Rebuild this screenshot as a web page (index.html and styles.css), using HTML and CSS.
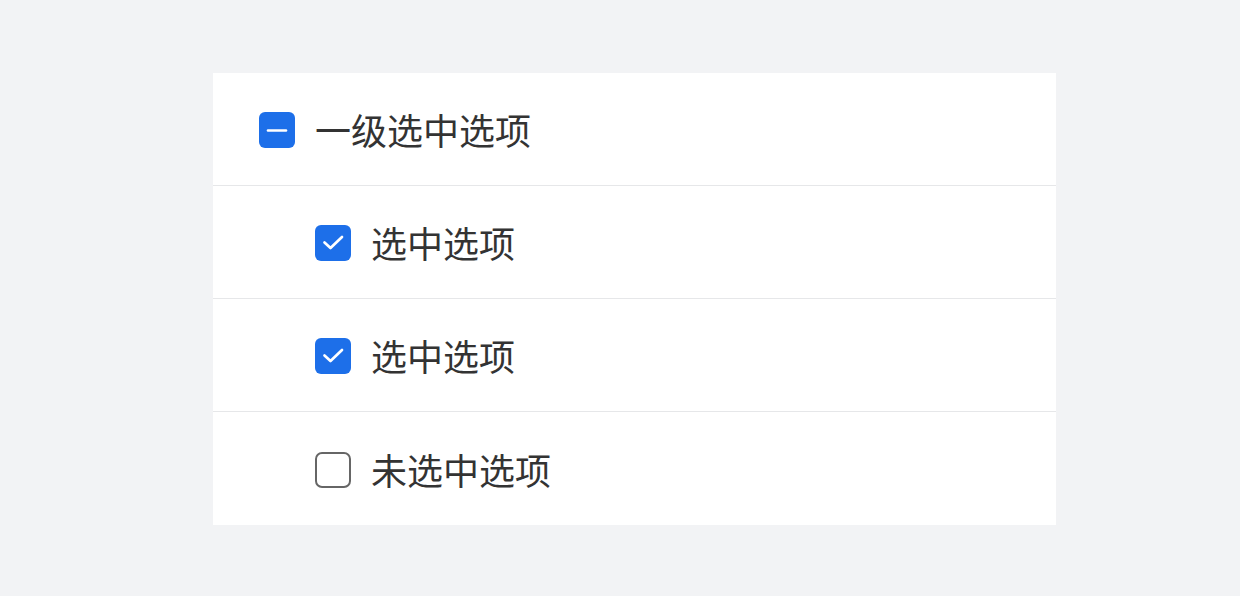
FILE: index.html
```html
<!DOCTYPE html>
<html lang="zh">
<head>
<meta charset="utf-8">
<link rel="stylesheet" href="styles.css">
</head>
<body>
<div class="card">
  <div class="row">
    <span class="box box-on">
      <svg width="36" height="36" viewBox="0 0 36 36"><path d="M9 18.5H27" stroke="#fff" stroke-width="2.6" stroke-linecap="round"/></svg>
    </span>
    <span class="label">一级选中选项</span>
  </div>
  <div class="row row-child">
    <span class="box box-on">
      <svg width="36" height="36" viewBox="0 0 36 36"><path d="M9.5 17.5L15.5 23L27 12" fill="none" stroke="#fff" stroke-width="2.7" stroke-linecap="round" stroke-linejoin="round"/></svg>
    </span>
    <span class="label">选中选项</span>
  </div>
  <div class="row row-child">
    <span class="box box-on">
      <svg width="36" height="36" viewBox="0 0 36 36"><path d="M9.5 17.5L15.5 23L27 12" fill="none" stroke="#fff" stroke-width="2.7" stroke-linecap="round" stroke-linejoin="round"/></svg>
    </span>
    <span class="label">选中选项</span>
  </div>
  <div class="row row-child">
    <span class="box box-off"></span>
    <span class="label">未选中选项</span>
  </div>
</div>
</body>
</html>
```

FILE: styles.css
```css
html, body {
  margin: 0;
  padding: 0;
  background: #f2f3f5;
}
body {
  padding: 73px 0 0 213px;
  font-family: "Noto Sans CJK SC", "Noto Sans", sans-serif;
}
.card {
  width: 843px;
  background: #ffffff;
  display: flex;
  flex-direction: column;
}
.row {
  height: 113px;
  box-sizing: border-box;
  display: flex;
  align-items: center;
  gap: 20px;
  padding-left: 46px;
  border-bottom: 1px solid #e6e7e9;
}
.row:last-child {
  border-bottom: none;
}
.row-child {
  padding-left: 102px;
}
.box {
  width: 36px;
  height: 36px;
  box-sizing: border-box;
  border-radius: 6px;
  flex: none;
  display: flex;
  margin-top: 2px;
}
.box-on {
  background: #1d6fe9;
}
.box-off {
  border: 2px solid #666666;
  background: #fff;
  border-radius: 7px;
}
.label {
  font-size: 36px;
  line-height: 1;
  color: #333333;
}
```
